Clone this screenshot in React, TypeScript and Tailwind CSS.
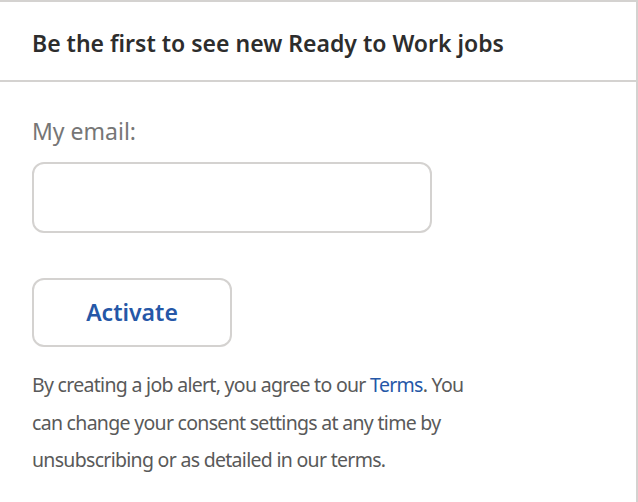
export default function App() {
  return (
    <div
      className="w-[638px] h-[502px] bg-white overflow-hidden"
      style={{ fontFamily: '"Noto Sans", "Open Sans", sans-serif' }}
    >
      <div className="border-t-2 border-r-2 border-[#d4d2d0] h-full">
        <div className="h-[80px] border-b-2 border-[#d4d2d0] px-8 flex items-center">
          <h2 className="text-[23px] font-semibold text-[#2d2d2d] leading-[30px] pt-[3px]">
            Be the first to see new Ready to Work jobs
          </h2>
        </div>
        <div className="px-8 pt-[34px]">
          <label className="block text-[23px] leading-[30px] text-[#767676]">
            My email:
          </label>
          <input
            type="email"
            className="mt-[16px] block w-[400px] h-[71px] rounded-xl border-2 border-[#d4d2d0] outline-none px-4"
          />
          <button className="mt-[45px] w-[200px] h-[69px] rounded-xl border-2 border-[#d4d2d0] bg-white text-[23px] font-semibold text-[#2557a7]">
            Activate
          </button>
          <p className="mt-[19px] max-w-[440px] text-[19.5px] tracking-[-0.7px] leading-[37.5px] text-[#595959]">
            By creating a job alert, you agree to our{" "}
            <a className="text-[#2557a7]">Terms</a>. You can change your consent
            settings at any time by unsubscribing or as detailed in our terms.
          </p>
        </div>
      </div>
    </div>
  );
}
